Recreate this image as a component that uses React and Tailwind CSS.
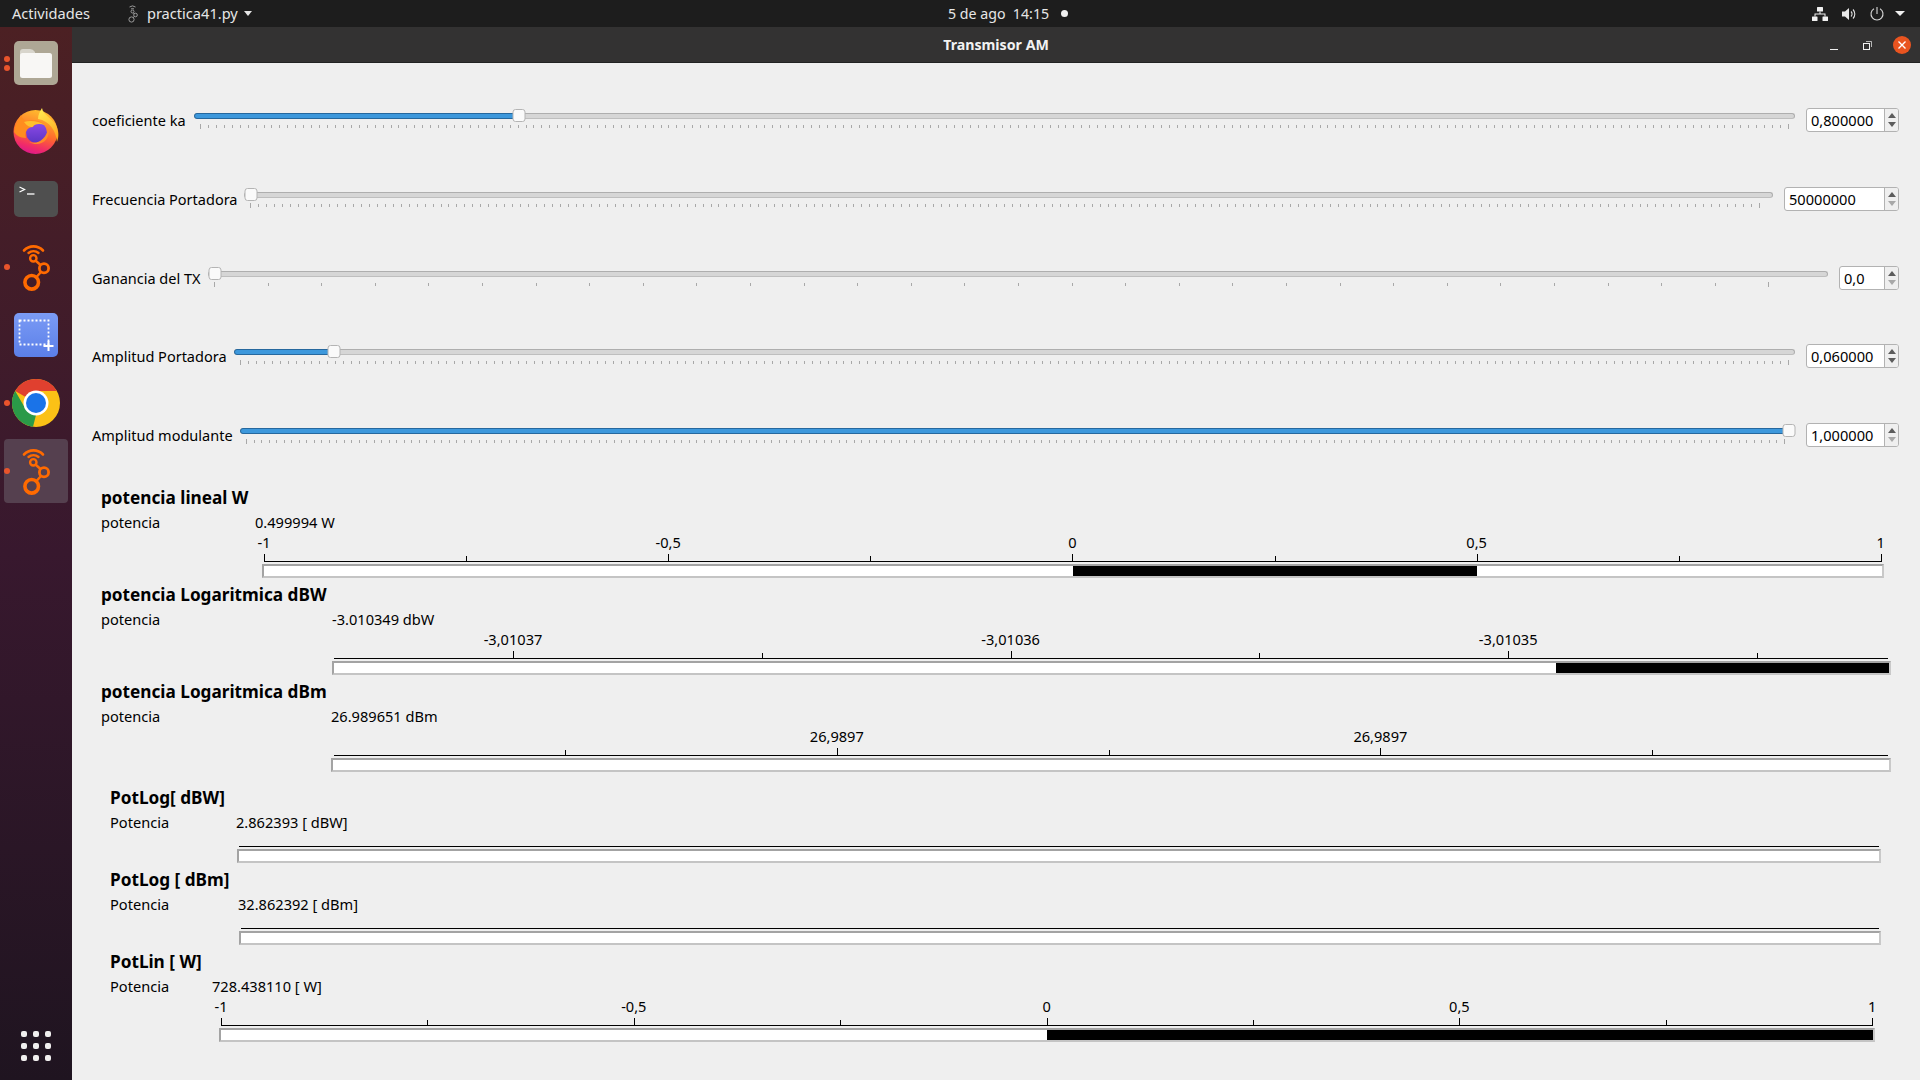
const sans = 'font-["Noto_Sans",sans-serif]';

function range(start, end, step) {
  const out = [];
  for (let x = start; x <= end + 0.5; x += step) out.push(x);
  return out;
}

const sliders = [
  { label: 'coeficiente ka', x: 194, end: 1795, knob: 518.5, first: 200, last: 1788, step: 7.94, box: 'w-[93px]', value: '0,800000', downDark: true },
  { label: 'Frecuencia Portadora', x: 244, end: 1773, knob: 250.5, first: 250, last: 1766, step: 7.94, box: 'w-[115px]', value: '50000000', fill: false },
  { label: 'Ganancia del TX', x: 208, end: 1828, knob: 214.5, first: 214, last: 1821, step: 53.6, box: 'w-[60px]', value: '0,0', fill: false },
  { label: 'Amplitud Portadora', x: 234, end: 1795, knob: 333.5, first: 240, last: 1788, step: 7.94, box: 'w-[93px]', value: '0,060000', downDark: true },
  { label: 'Amplitud modulante', x: 240, end: 1795, knob: 1788.5, first: 246, last: 1788, step: 7.5, box: 'w-[93px]', value: '1,000000' },
];

const meters = [
  {
    title: 'potencia lineal W', label: 'potencia', value: '0.499994 W', pad: 'pl-[29px]', col: 'w-[154px]', high: true,
    barX: 262, barEnd: 1884, axisX: 264, axisEnd: 1881, fillX: 1073, fillEnd: 1477, ml: 'ml-[161px]', width: 'w-[1622px]',
    ticks: range(264, 1881, 202.1), labels: ['-1', '-0,5', '0', '0,5', '1'], every: 2,
  },
  {
    title: 'potencia Logaritmica dBW', label: 'potencia', value: '-3.010349 dbW', pad: 'pl-[29px]', col: 'w-[231px]', high: true,
    barX: 332, barEnd: 1891, axisX: 334, axisEnd: 1888, fillX: 1556, fillEnd: 1889, ml: 'ml-[231px]', width: 'w-[1559px]',
    ticks: range(513, 1757, 248.8), labels: ['-3,01037', '-3,01036', '-3,01035'], every: 2,
  },
  {
    title: 'potencia Logaritmica dBm', label: 'potencia', value: '26.989651 dBm', pad: 'pl-[29px]', col: 'w-[230px]', high: true,
    barX: 331, barEnd: 1891, axisX: 334, axisEnd: 1888, ml: 'ml-[230px]', width: 'w-[1560px]',
    ticks: range(565, 1652, 271.8), labels: ['', '26,9897', '', '26,9897', ''], every: 1,
  },
  {
    title: 'PotLog[ dBW]', label: 'Potencia', value: '2.862393 [ dBW]', pad: 'pl-[38px]', col: 'w-[126px]',
    barX: 237, barEnd: 1881, axisX: 239, axisEnd: 1879, ml: 'ml-[127px]', width: 'w-[1644px]', ticks: [],
  },
  {
    title: 'PotLog [ dBm]', label: 'Potencia', value: '32.862392 [ dBm]', pad: 'pl-[38px]', col: 'w-[128px]',
    barX: 239, barEnd: 1881, axisX: 241, axisEnd: 1879, ml: 'ml-[129px]', width: 'w-[1642px]', ticks: [],
  },
  {
    title: 'PotLin [ W]', label: 'Potencia', value: '728.438110 [ W]', pad: 'pl-[38px]', col: 'w-[102px]', high: true,
    barX: 219, barEnd: 1875, axisX: 221, axisEnd: 1873, fillX: 1047, fillEnd: 1873, ml: 'ml-[109px]', width: 'w-[1656px]',
    ticks: range(221, 1873, 206.4), labels: ['-1', '-0,5', '0', '0,5', '1'], every: 2,
  },
];

function GnuRadio({ className }) {
  return (
    <svg viewBox="0 0 30 48" className={className} fill="none" stroke="#ff6a00">
      <path d="M3 7.5 A13 13 0 0 1 22 7.5" strokeWidth="2.6" strokeLinecap="round" />
      <path d="M7.5 10 A7.5 7.5 0 0 1 17.5 10" strokeWidth="2.4" strokeLinecap="round" />
      <circle cx="12.3" cy="15.3" r="3.2" strokeWidth="2.4" />
      <path d="M15 18 L19.5 22 M20 29 L15.5 34" strokeWidth="2.4" />
      <circle cx="23" cy="25.3" r="4.6" strokeWidth="2.8" />
      <circle cx="10.7" cy="39.3" r="6.8" strokeWidth="3.6" />
    </svg>
  );
}

function Firefox() {
  return (
    <svg viewBox="0 0 48 48" className="h-[48px] w-[48px]">
      <defs>
        <linearGradient id="ffBody" x1="0.7" y1="0" x2="0.4" y2="1">
          <stop offset="0" stopColor="#ffc22e" />
          <stop offset="0.55" stopColor="#ff6a2c" />
          <stop offset="0.85" stopColor="#f02a6a" />
          <stop offset="1" stopColor="#dd1a8a" />
        </linearGradient>
        <linearGradient id="ffFlame" x1="0.3" y1="0" x2="0.7" y2="1">
          <stop offset="0" stopColor="#ffe84f" />
          <stop offset="1" stopColor="#ffa41f" />
        </linearGradient>
        <linearGradient id="ffDisc" x1="0.5" y1="0" x2="0.5" y2="1">
          <stop offset="0" stopColor="#8f4be8" />
          <stop offset="1" stopColor="#5b35c4" />
        </linearGradient>
      </defs>
      <circle cx="23.5" cy="25" r="22" fill="url(#ffBody)" />
      <path d="M30 1 C31 8 40 11 44 18 C47 24 47 30 45 35 C44 24 38 14 26 12 C26 8 28 4 30 1 Z" fill="url(#ffFlame)" />
      <circle cx="24.5" cy="25.5" r="10.5" fill="url(#ffDisc)" />
      <path d="M2 25 C3 17 7 12 9 8 C10 11 12 13 14 14 C19 12 28 13 33 18 C27 15 22 17 21 20 C16 20 12 24 14 31 C8 31 4 28 2 25 Z" fill="#ff8d1f" />
      <path d="M12 15 C18 13 27 14 33 18 C27 16 22 17 20.5 20 C17 20 15 19 12 15 Z" fill="#ffc02e" />
      <path d="M36.5 21 C39 33 28 41 17 35 C26 38 34 32 36.5 21 Z" fill="#ff8a2a" />
    </svg>
  );
}

function Chrome() {
  return (
    <svg viewBox="0 0 48 48" className="h-[48px] w-[48px]">
      <circle cx="24" cy="24" r="24" fill="#fbc116" />
      <path d="M24 0 A24 24 0 0 1 44.8 12 L24 12 A12 12 0 0 0 13.6 18 L3.2 12 A24 24 0 0 1 24 0 Z" fill="#e0402f" />
      <path d="M3.2 12 L13.6 30 L24 36 L21 47.8 A24 24 0 0 1 3.2 12 Z" fill="#2a9a48" />
      <circle cx="24" cy="24" r="12.5" fill="#fff" />
      <circle cx="24" cy="24" r="10" fill="#1a73e8" />
    </svg>
  );
}

function Dock() {
  const cell = 'relative flex h-[68px] w-full shrink-0 items-center justify-center';
  const dot = 'absolute left-[4px] h-[6px] w-[6px] rounded-full bg-[#e9542c]';
  return (
    <aside className="flex w-[72px] shrink-0 flex-col bg-gradient-to-b from-[#4c2023] via-[#38182e] to-[#1f1420] pt-[2px]">
      <div className={cell}>
        <span className={`${dot} top-[27px]`} />
        <span className={`${dot} top-[36px]`} />
        <div className="flex h-[44px] w-[44px] items-center justify-center rounded-[5px] bg-[#aea795]">
          <svg viewBox="0 0 33 29" className="h-[29px] w-[33px]">
            <path d="M0 3 Q0 0 3 0 H10 Q13 0 15 3 V6 H0 Z" fill="#d8d5cc" />
            <rect y="4" width="32" height="25" rx="2.5" fill="#f8f7f5" />
          </svg>
        </div>
      </div>
      <div className={cell}>
        <Firefox />
      </div>
      <div className={cell}>
        <div className="flex h-[36px] w-[44px] items-start rounded-[5px] bg-[#4f4f4f] p-[5px]">
          <svg viewBox="0 0 16 9" className="h-[9px] w-[16px]" fill="none" stroke="#fff" strokeWidth="1.3">
            <path d="M0.5 1 L5.5 3.5 L0.5 6" />
            <path d="M8 8 H15.5" />
          </svg>
        </div>
      </div>
      <div className={cell}>
        <span className={`${dot} top-[31px]`} />
        <GnuRadio className="h-[48px] w-[30px]" />
      </div>
      <div className={cell}>
        <div className="flex h-[44px] w-[44px] items-center justify-center rounded-[5px] bg-gradient-to-b from-[#7b9bf5] to-[#5b7fe8]">
          <svg viewBox="0 0 36 32" className="h-[32px] w-[36px]" fill="none" stroke="#fff">
            <rect x="1.5" y="1.5" width="29" height="24" strokeWidth="1.8" strokeDasharray="2 2" />
            <path d="M30.5 22 V32 M25.5 27 H35.5" strokeWidth="2" />
          </svg>
        </div>
      </div>
      <div className={cell}>
        <span className={`${dot} top-[31px]`} />
        <Chrome />
      </div>
      <div className={cell}>
        <div className="absolute inset-x-[4px] inset-y-[2px] rounded-[4px] bg-[#55404f]" />
        <span className={`${dot} top-[31px]`} />
        <GnuRadio className="relative h-[48px] w-[30px]" />
      </div>
      <div className="mt-auto mb-[19px] ml-[21px] grid w-fit grid-cols-3 gap-[6px]">
        {range(1, 9, 1).map((i) => (
          <span key={i} className="h-[6px] w-[6px] rounded-[2px] bg-[#f0eeee]" />
        ))}
      </div>
    </aside>
  );
}

function TopBar() {
  return (
    <header className={`relative flex h-[27px] shrink-0 items-center bg-[#1d1d1d] text-[14.6px] text-[#e6e6e6] ${sans}`}>
      <span className="ml-[12px]">Actividades</span>
      <svg viewBox="0 0 10 18" className="ml-[38px] h-[18px] w-[10px]" fill="none" stroke="#9a9a9a" strokeWidth="1">
        <path d="M1.5 2 A5 5 0 0 1 7.5 2 M3 4 A2.5 2.5 0 0 1 6 4" />
        <circle cx="4.5" cy="6.5" r="1.5" />
        <circle cx="7.5" cy="10" r="1.8" />
        <circle cx="3.5" cy="14.5" r="2.6" />
        <path d="M5.5 8 L6.5 9 M6.5 11.5 L5 12.5" />
      </svg>
      <span className="ml-[9px]">practica41.py</span>
      <span className="ml-[6px] h-0 w-0 border-x-[4px] border-t-[5px] border-x-transparent border-t-[#e6e6e6]" />
      <div className="absolute left-[948px] flex items-center">
        <span className="w-[113px] text-[14.2px]">5 de ago&nbsp;&nbsp;14:15</span>
        <span className="h-[7px] w-[7px] rounded-full bg-[#f0f0f0]" />
      </div>
      <div className="ml-auto mr-[15px] flex items-center">
        <svg viewBox="0 0 16 14" className="mr-[14px] h-[14px] w-[16px]" fill="#f0f0f0">
          <rect x="5" y="0" width="6" height="4.5" rx="0.5" />
          <rect x="0" y="9.5" width="5.5" height="4.5" rx="0.5" />
          <rect x="10.5" y="9.5" width="5.5" height="4.5" rx="0.5" />
          <path d="M7.5 4.5 H8.5 V6.5 H13.5 V9.5 H12.5 V7.5 H3.5 V9.5 H2.5 V6.5 H7.5 Z" />
        </svg>
        <svg viewBox="0 0 15 14" className="mr-[13px] h-[14px] w-[15px]" fill="none" stroke="#e0e0e0">
          <path d="M0 4.5 H3 L7 1 V13 L3 9.5 H0 Z" fill="#e8e8e8" stroke="none" />
          <path d="M9 4.5 A3.5 3.5 0 0 1 9 9.5" strokeWidth="1.1" />
          <path d="M11 2.5 A6.5 6.5 0 0 1 11 11.5" strokeWidth="1.1" />
        </svg>
        <svg viewBox="0 0 14 14" className="mr-[11px] h-[14px] w-[14px]" fill="none" stroke="#d8d8d8" strokeWidth="1.1">
          <path d="M4 1.8 A6 6 0 1 0 10 1.8" />
          <path d="M7 0 V7" />
        </svg>
        <span className="h-0 w-0 border-x-[5px] border-t-[5px] border-x-transparent border-t-[#f0f0f0]" />
      </div>
    </header>
  );
}

function TitleBar() {
  return (
    <div className="relative flex h-[36px] shrink-0 items-center justify-center border-b border-[#222] bg-[#333232] pt-px">
      <span className={`text-[14.2px] font-bold text-[#f2f2f2] ${sans}`}>Transmisor AM</span>
      <div className="absolute right-[9px] top-[9px] flex items-center">
        <span className="mr-[25px] mt-[9px] h-px w-[8px] bg-[#f0f0f0]" />
        <svg viewBox="0 0 9 9" className="mr-[21px] h-[9px] w-[9px]" fill="none" stroke="#f0f0f0">
          <rect x="0.5" y="2.5" width="6" height="6" />
          <path d="M3 0.5 H8.5 V6" strokeWidth="0.7" />
        </svg>
        <span className="flex h-[18px] w-[18px] items-center justify-center rounded-full bg-[#e95420]">
          <svg viewBox="0 0 8 8" className="h-[8px] w-[8px]" stroke="#fff" strokeWidth="1.4">
            <path d="M0.5 0.5 L7.5 7.5 M7.5 0.5 L0.5 7.5" />
          </svg>
        </span>
      </div>
    </div>
  );
}

function SpinBox({ className, value, downDark }) {
  return (
    <div className={`flex h-[24px] shrink-0 rounded-[3px] border border-[#b2b2b2] bg-white ${className}`}>
      <span className="flex-1 pl-[4px] text-[14.6px] leading-[23px] text-black">{value}</span>
      <span className="flex w-[14px] flex-col items-center justify-center gap-[4px] rounded-r-[2px] border-l border-[#b2b2b2] bg-[#efefef]">
        <span className="h-0 w-0 border-x-[4px] border-b-[5px] border-x-transparent border-b-[#5c5c5c]" />
        <span className={`h-0 w-0 border-x-[4px] border-t-[5px] border-x-transparent ${downDark ? 'border-t-[#5c5c5c]' : 'border-t-[#a8a8a8]'}`} />
      </span>
    </div>
  );
}

function SliderRow({ s }) {
  const ticks = range(s.first, s.last, s.step);
  return (
    <div className="flex h-[24px] items-center">
      <span className="shrink-0 pt-px text-[14.5px] text-black" style={{ width: s.x - 92 }}>{s.label}</span>
      <div className="relative h-[24px] flex-1">
        <div className="absolute inset-x-0 top-[5px] h-[6px] rounded-full border border-[#aeaeae] border-b-[#bebebe] bg-[#d6d6d6]" />
        {s.fill !== false && (
          <div
            className="absolute left-0 top-[5px] h-[6px] rounded-l-full border border-[#26689e] bg-[#3d98dc]"
            style={{ width: s.knob - s.x }}
          />
        )}
        <div
          className="absolute top-px h-[13px] w-[13px] -translate-x-1/2 rounded-[3px] border border-[#b4b4b4] bg-[#fafafa]"
          style={{ left: s.knob - s.x }}
        />
        <svg className="absolute left-0 top-[16px] h-[6px] w-full" stroke="#a8a8a8">
          {ticks.map((t, i) => {
            const x = Math.round(t - s.x) + 0.5;
            const tall = i === 0 || i === ticks.length - 1;
            return <line key={t} x1={x} x2={x} y1={tall ? 0 : 1} y2={tall ? 5 : 4} />;
          })}
        </svg>
      </div>
      <div className="w-[11px] shrink-0" />
      <SpinBox className={s.box} value={s.value} downDark={s.downDark} />
      <div className="w-px" />
    </div>
  );
}

function Meter({ m }) {
  const inner = m.barEnd - m.barX - 4;
  return (
    <section className={`${m.pad} ${m.high ? 'h-[97px]' : 'h-[82px]'} shrink-0 pt-px`}>
      <h2 className="h-[20px] text-[17.2px] font-bold leading-[20px] text-black">{m.title}</h2>
      <div className="mt-[5px] flex h-[20px] items-center text-[14.6px] text-black">
        <span className={`${m.col} shrink-0`}>{m.label}</span>
        <span>{m.value}</span>
      </div>
      <div className={`${m.ml} ${m.width}`}>
        <div className={`relative flex items-end ${m.labels ? 'h-[31px]' : 'h-[16px]'}`}>
          {m.labels && m.ticks.map((t, i) => {
            const text = i % m.every === 0 ? m.labels[i / m.every] : '';
            if (!text) return null;
            return (
              <span
                key={t}
                className="absolute -top-px -translate-x-1/2 text-[14.6px] leading-[20px] text-black"
                style={{ left: t - m.barX }}
              >
                {text}
              </span>
            );
          })}
          <svg className="h-[10px] w-full" stroke="#000">
            <line x1={m.axisX - m.barX} x2={m.axisEnd - m.barX} y1="7.5" y2="7.5" />
            {m.ticks.map((t, i) => {
              const x = Math.round(t - m.barX) + 0.5;
              const major = m.labels && i % m.every === 0 && m.labels[i / m.every];
              return <line key={t} x1={x} x2={x} y1={major ? 0 : 2} y2="8" />;
            })}
          </svg>
        </div>
        <div className="h-[14px] border-2 border-[#a3a3a3] border-r-[#c9c9c9] border-b-[#c4c4c4] bg-white">
          {m.fillX && (
            <div
              className="h-full bg-black"
              style={{ marginLeft: m.fillX - m.barX - 2, width: Math.min(m.fillEnd - m.fillX, inner) }}
            />
          )}
        </div>
      </div>
    </section>
  );
}

export default function App() {
  return (
    <div className={`flex h-[1080px] w-[1920px] flex-col overflow-hidden bg-[#efefef] ${sans}`}>
      <TopBar />
      <div className="flex min-h-0 flex-1">
        <Dock />
        <main className="flex min-w-0 flex-1 flex-col">
          <TitleBar />
          <div className="flex flex-1 flex-col pt-[45px]">
            <div className="flex flex-col gap-[55px] pl-[20px] pr-[20px] [&>*:nth-child(4)]:-mt-px">
              {sliders.map((s) => (
                <SliderRow key={s.label} s={s} />
              ))}
            </div>
            <div className="mt-[40px]">
              {meters.slice(0, 3).map((m) => (
                <Meter key={m.title} m={m} />
              ))}
            </div>
            <div className="mt-[9px]">
              {meters.slice(3).map((m) => (
                <Meter key={m.title} m={m} />
              ))}
            </div>
          </div>
        </main>
      </div>
    </div>
  );
}
